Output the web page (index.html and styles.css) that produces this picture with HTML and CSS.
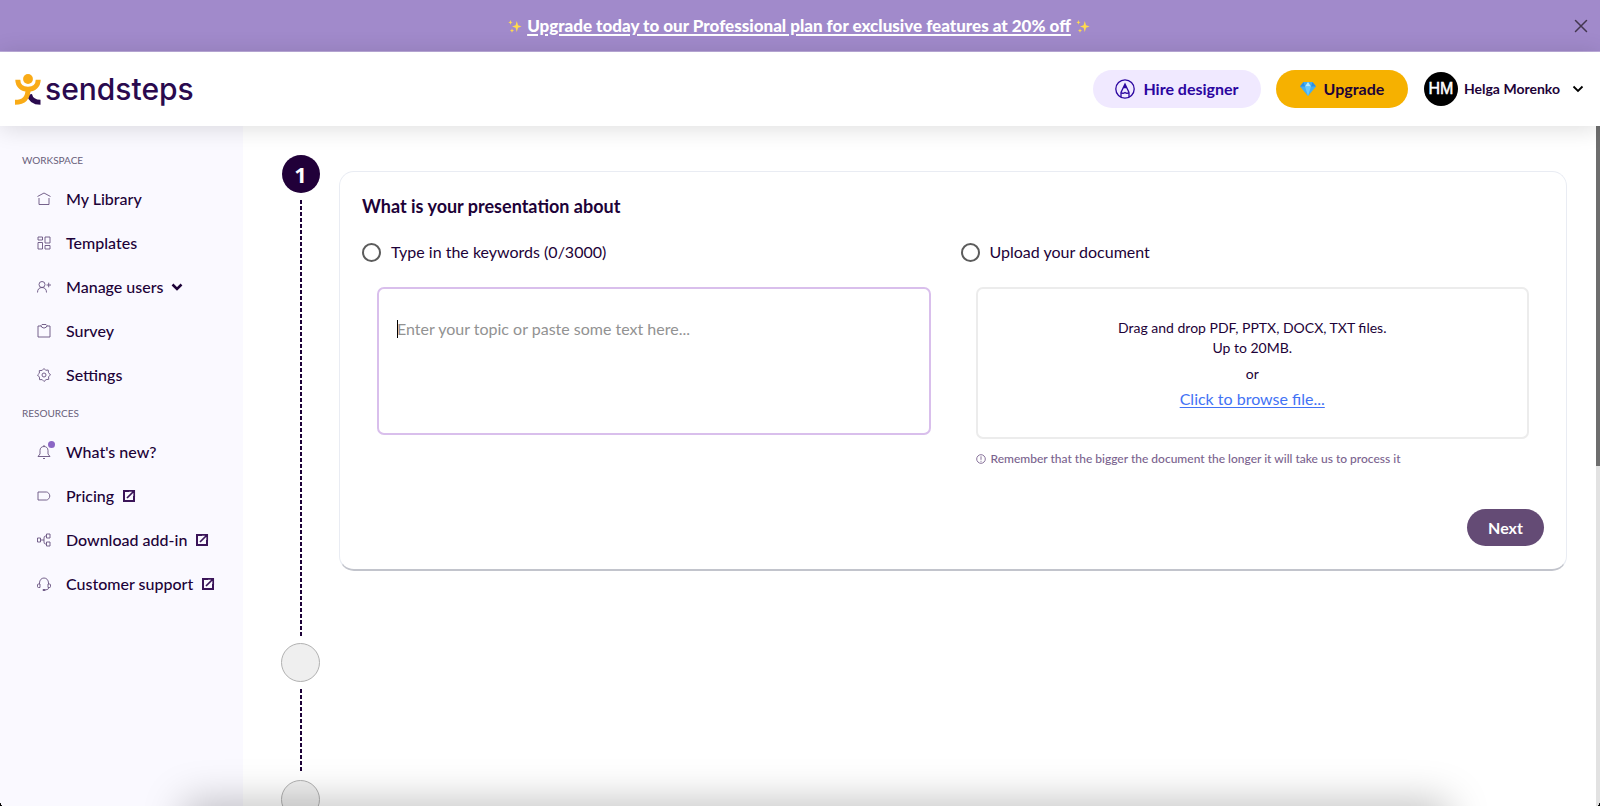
FILE: index.html
```html
<!DOCTYPE html>
<html lang="en">
<head>
<meta charset="utf-8">
<meta name="viewport" content="width=device-width, initial-scale=1">
<title>Sendsteps</title>
<link rel="stylesheet" href="styles.css">
</head>
<body>
<svg class="defs" aria-hidden="true">
  <symbol id="sparkles" viewBox="0 0 14 14"><path d="M8.8 2 10 6.2 13.6 7.5 10 8.8 8.8 13 7.6 8.8 4 7.5 7.6 6.2zM2.4 1 3 2.8 4.6 3.4 3 4 2.4 5.8 1.8 4 .3 3.4 1.8 2.8zM4 9.4 4.6 11 6 11.6 4.6 12.2 4 13.8 3.4 12.2 2 11.6 3.4 11z" fill="#ffdb4d"/></symbol>
  <symbol id="external" viewBox="0 0 14 14"><path d="M7 2H2v10h10V7" fill="none" stroke="currentColor" stroke-width="2"/><path d="M6 1.800h6.200V8M12 2 5 9" fill="none" stroke="currentColor" stroke-width="1.700"/></symbol>
</svg>
<div class="banner">
  <p class="banner-text">
    <svg class="spark"><use href="#sparkles"/></svg>
    <a href="#">Upgrade today to our Professional plan for exclusive features at 20% off</a>
    <svg class="spark"><use href="#sparkles"/></svg>
  </p>
  <button class="close" aria-label="Close"><svg viewBox="0 0 14 14"><path d="M1.500 1.500l11 11M12.500 1.500l-11 11"/></svg></button>
</div>
<header class="header">
  <a class="logo" href="#">
    <svg class="logo-mark" viewBox="0 0 26 31"><circle cx="13" cy="5" r="4.900" fill="#f9ab17"/><path d="M2.800 5.800C2.800 11.500 7 15.200 13 15.200S23.200 11.500 23.200 5.800" fill="none" stroke="#f9ab17" stroke-width="5"/><path d="M14.500 20.500C15.500 25.500 19.500 28.300 25.500 28.300" fill="none" stroke="#2a0a4e" stroke-width="5"/><path d="M13.200 14C13.200 24 9 28.300 0 28.300" fill="none" stroke="#f9ab17" stroke-width="5"/></svg>
    <span>sendsteps</span>
  </a>
  <div class="actions">
    <button class="pill hire"><svg class="hire-icon" viewBox="0 0 20 20"><circle cx="10" cy="10" r="9.200"/><path d="M6 18V13.500L10 5l4 8.500V18M6 13.500q2 1.500 4 0 2 1.500 4 0M8.500 8.500h3M10 5v3"/></svg>Hire designer</button>
    <button class="pill upgrade"><svg class="gem" viewBox="0 0 16 14"><path d="M3.500 0h9L16 4.500 8 14 0 4.500z" fill="#45aef0"/><path d="M3.500 0 5 4.500H0zM12.500 0 11 4.500h5z" fill="#2f8fe0"/><path d="M5 4.500 8 0l3 4.500z" fill="#b5ecff"/><path d="M5 4.500h6L8 14z" fill="#66c9ff"/></svg>Upgrade</button>
    <button class="user"><span class="avatar">HM</span><span>Helga Morenko</span><svg class="chev" viewBox="0 0 12 12"><path d="M1.500 3.500 6 8l4.500-4.500"/></svg></button>
  </div>
</header>
<div class="body">
  <nav class="sidebar">
    <h2 class="nav-title">WORKSPACE</h2>
    <a class="nav-item" href="#"><svg viewBox="0 0 14 14"><path d="M.5 4.500 7 1l6.500 3.500M2 6v6.500h10V6"/></svg>My Library</a>
    <a class="nav-item" href="#"><svg viewBox="0 0 14 14"><path d="M1 1h4.500v3H1zM8 1h5v6H8zM1 6.500h4.500V13H1zM8 9.500h5V13H8z"/></svg>Templates</a>
    <button class="nav-item"><svg viewBox="0 0 14 14"><circle cx="5" cy="4.500" r="3"/><path d="M.5 12.500c0-3 1.500-5 4.500-5s4.500 2 4.500 5M9.500 5h4.500M11.700 2.700v4.600"/></svg>Manage users<svg class="chev bold" viewBox="0 0 12 12"><path d="M1.500 3.500 6 8l4.500-4.500"/></svg></button>
    <a class="nav-item" href="#"><svg viewBox="0 0 14 14"><path d="M4 2H1v11h12V2h-3M4 1.500 5 .5h4l1 1-1 2H8l-1 .8-1-.8H5z"/></svg>Survey</a>
    <a class="nav-item" href="#"><svg viewBox="0 0 14 14"><circle cx="7" cy="7" r="2"/><path d="M7 .5 8.700 2.300l2.500-.3.300 2.500L13.500 7l-2 1.700.3 2.600-2.700.3L7 13.500l-1.800-1.900-2.600.1-.2-2.600L.5 7l1.900-1.800-.1-2.600 2.900-.2z"/></svg>Settings</a>
    <h2 class="nav-title second">RESOURCES</h2>
    <a class="nav-item" href="#"><span class="bell"><svg viewBox="0 0 14 14"><path d="M1 11.500h12L11 9V5.500C11 3 9.300 1.500 7 1.500S3 3 3 5.500V9zM6 13.500h2M7 0v1.500"/></svg></span>What's new?</a>
    <a class="nav-item" href="#"><svg viewBox="0 0 14 14"><path d="M1 3h8.500C11 3 12.800 5 12.800 7S11 11 9.500 11H1z"/></svg>Pricing<svg class="ext"><use href="#external"/></svg></a>
    <a class="nav-item" href="#"><svg viewBox="0 0 14 14"><path d="M.5 5h3v4h-3zM3.500 7H7M9.500 3H8.500Q7 3 7 5v4q0 2 1.500 2h1M9.500 1h3.500v4H9.500zM9.500 9h3.500v4H9.500z"/></svg>Download add-in<svg class="ext"><use href="#external"/></svg></a>
    <a class="nav-item" href="#"><svg viewBox="0 0 14 14"><path d="M2.500 7V6c0-3 2-5 4.500-5s4.500 2 4.500 5v1M3 7H1.500Q.5 7 .5 8v1.500q0 1 1 1H3zM11 7h1.500q1 0 1 1v1.500q0 1-1 1H11zM12 10.500Q11.500 13 8 13M6 12.500h2v1H6z"/></svg>Customer support<svg class="ext"><use href="#external"/></svg></a>
  </nav>
  <main class="main">
    <section class="step">
      <div class="rail"><span class="dot active">1</span><span class="line"></span></div>
      <form class="card">
        <h1>What is your presentation about</h1>
        <div class="options">
          <div class="option">
            <label class="choice"><input type="radio" name="source">Type in the keywords (0/3000)</label>
            <div class="field"><textarea aria-label="Topic" placeholder="Enter your topic or paste some text here..."></textarea><span class="caret"></span></div>
          </div>
          <div class="option">
            <label class="choice"><input type="radio" name="source">Upload your document</label>
            <div class="drop">
              <p>Drag and drop PDF, PPTX, DOCX, TXT files.<br>Up to 20MB.</p>
              <p>or</p>
              <a href="#">Click to browse file...</a>
            </div>
            <p class="note"><svg viewBox="0 0 10 10"><circle cx="5" cy="5" r="4.300"/><path d="M5 2.300v3.500M5 6.800v1"/></svg>Remember that the bigger the document the longer it will take us to process it</p>
          </div>
        </div>
        <div class="footer"><button type="button" class="next">Next</button></div>
      </form>
    </section>
    <section class="step short">
      <div class="rail"><span class="dot"></span><span class="line"></span></div>
    </section>
    <section class="step short">
      <div class="rail"><span class="dot"></span></div>
    </section>
  </main>
  <div class="scrollbar"><div class="thumb"></div></div>
</div>
<div class="dock-shadow"></div>
<span class="corner left"></span><span class="corner right"></span>
</body>
</html>
```
FILE: styles.css
```css
* { box-sizing: border-box; }
body {
  margin: 0;
  height: 100vh;
  display: flex;
  flex-direction: column;
  overflow: hidden;
  background: #fff;
  color: #1d0238;
  font: 16px/20px Lato, "Open Sans", sans-serif;
}
button { font: inherit; color: inherit; border: 0; background: none; padding: 0; cursor: pointer; }
a { color: inherit; text-decoration: none; }
p, h1, h2 { margin: 0; }
svg { flex: none; }
.defs { position: absolute; width: 0; height: 0; }

.banner {
  flex: none;
  display: flex;
  align-items: center;
  height: 52px;
  padding: 0 12px 0 24px;
  background: #a18acb;
  border-bottom: 1px solid #bfaedd;
  color: #fff;
}
.banner-text { flex: 1; display: flex; justify-content: center; align-items: center; gap: 5px; font-size: 17px; font-weight: 900; }
.banner-text a { text-decoration: underline; text-decoration-thickness: 2px; text-underline-offset: 2px; }
.spark { width: 14px; height: 14px; }
.close { width: 14px; height: 14px; }
.close svg { display: block; fill: none; stroke: #43364f; stroke-width: 1.500; stroke-linecap: round; }

.header {
  flex: none;
  position: relative;
  z-index: 1;
  display: flex;
  align-items: center;
  justify-content: space-between;
  height: 74px;
  padding: 0 16px 0 15px;
  background: #fff;
  box-shadow: 0 2px 24px rgba(0, 0, 0, .14);
}
.logo { display: flex; align-items: center; gap: 4px; font: 500 30px/32px Inter, sans-serif; color: #2a0a4e; }
.logo-mark { width: 26px; height: 31px; }
.actions { display: flex; align-items: center; }
.pill { display: flex; align-items: center; justify-content: center; height: 38px; border-radius: 19px; font-weight: 700; }
.hire { width: 168px; margin-right: 15px; gap: 8px; background: #f0e9ff; color: #2b05a0; }
.hire-icon { width: 20px; height: 20px; fill: none; stroke: currentColor; stroke-width: 1.300; }
.upgrade { width: 132px; margin-right: 16px; gap: 8px; background: #f6b100; }
.gem { width: 16px; height: 14px; }
.user { display: flex; align-items: center; gap: 6px; font-size: 14px; font-weight: 700; }
.avatar { width: 34px; height: 34px; border-radius: 50%; background: #000; color: #fff; font: 16px/34px "Liberation Sans", sans-serif; -webkit-text-stroke: .5px #fff; }
.chev { width: 12px; height: 12px; margin-left: 6px; fill: none; stroke: #000; stroke-width: 1.800; }

.body { flex: 1; min-height: 0; display: flex; }
.sidebar { flex: none; width: 243px; padding: 24px 22px; background: #faf9ff; }
.nav-title { font-size: 10px; line-height: 20px; font-weight: 400; color: #69607a; }
.nav-title.second { margin-top: 6px; }
.nav-item { display: flex; align-items: center; width: 100%; height: 44px; padding-left: 15px; font-weight: 500; }
.nav-title + .nav-item { margin-top: 7px; }
.nav-item > svg:first-child, .bell { width: 14px; height: 14px; margin-right: 15px; }
.nav-item svg { fill: none; stroke: #66517f; stroke-width: .9; }
.nav-item .ext { width: 14px; height: 14px; margin-left: 8px; color: #3b1559; stroke: none; }
.nav-item .chev { margin-left: 7px; stroke: #1d0238; stroke-width: 2.500; }
.bell { position: relative; }
.bell svg { display: block; }
.bell::after { content: ""; position: absolute; top: -4px; right: -4px; width: 7px; height: 7px; border-radius: 50%; background: #8b66c5; }

.main { flex: 1; min-width: 0; overflow: hidden; padding: 29px 29px 0 38px; }
.step { display: flex; gap: 19px; min-height: 488px; align-items: stretch; }
.step.short { min-height: 137px; }
.rail { flex: none; width: 39px; display: flex; flex-direction: column; align-items: center; gap: 7px; padding-bottom: 7px; }
.dot { flex: none; width: 39px; height: 39px; border: 1px solid #b1b1b1; border-radius: 50%; background: #efefef; }
.dot.active { width: 38px; height: 38px; border: 0; background: #210039; color: #fff; font: 700 22px/38px "Open Sans", sans-serif; text-align: center; }
.line { flex: 1; width: 2px; background: repeating-linear-gradient(#1d0238 0 4px, transparent 4px 6px); }
.card {
  flex: 1;
  align-self: flex-start;
  min-width: 0;
  margin-top: 16px;
  padding: 23px 22px 23px;
  border: 1px solid #e9ecf3;
  border-bottom: 2px solid #c2c4cc;
  border-radius: 15px;
}
h1 { font-size: 18px; line-height: 22px; font-weight: 700; }
.options { display: grid; grid-template-columns: 1fr 1fr; gap: 15px; }
.option { padding-right: 15px; }
.choice { display: flex; align-items: center; gap: 10px; height: 20px; margin: 25px 0; }
input[type="radio"] { appearance: none; width: 19px; height: 19px; margin: 0; border: 2px solid #5c5c5c; border-radius: 50%; }
.field { position: relative; margin-left: 15px; }
textarea { display: block; width: 100%; height: 148px; padding: 30px 18px; border: 2px solid #d9bfec; border-radius: 7px; outline: 0; resize: none; font: inherit; color: inherit; }
textarea::placeholder { color: #929292; opacity: 1; }
.caret { position: absolute; left: 20px; top: 33px; width: 1px; height: 18px; background: #000; }
.drop { height: 152px; margin-left: 15px; padding: 29px 0 0; border: 2px solid #ececec; border-radius: 7px; text-align: center; font-size: 14px; }
.drop p + p { margin-top: 6px; }
.drop a { display: block; margin-top: 5px; font-size: 16px; color: #4272f5; text-decoration: underline; text-underline-offset: 2px; }
.note { display: flex; align-items: center; gap: 5px; margin: 10px 0 0 15px; font-size: 12px; color: #7a638e; font-weight: 500; }
.note svg { width: 10px; height: 10px; fill: none; stroke: currentColor; stroke-width: .9; }
.footer { display: flex; justify-content: flex-end; margin-top: 40px; }
.next { width: 77px; height: 37px; border-radius: 19px; background: #644b75; color: #fff; font-weight: 700; }

.scrollbar { flex: none; width: 4px; background: #e2e2e2; }
.thumb { height: 50%; background: #6e6e6e; }
.dock-shadow { position: absolute; z-index: 2; left: 12%; right: 10%; bottom: -34px; height: 30px; box-shadow: 0 0 40px 8px rgba(0, 0, 0, .25); }
.corner { position: absolute; z-index: 3; bottom: 0; width: 3px; height: 7px; }
.corner.left { left: 0; background: radial-gradient(ellipse at 100% 0, transparent 70%, #000 75%); }
.corner.right { right: 0; background: radial-gradient(ellipse at 0 0, transparent 70%, #000 75%); }
```
